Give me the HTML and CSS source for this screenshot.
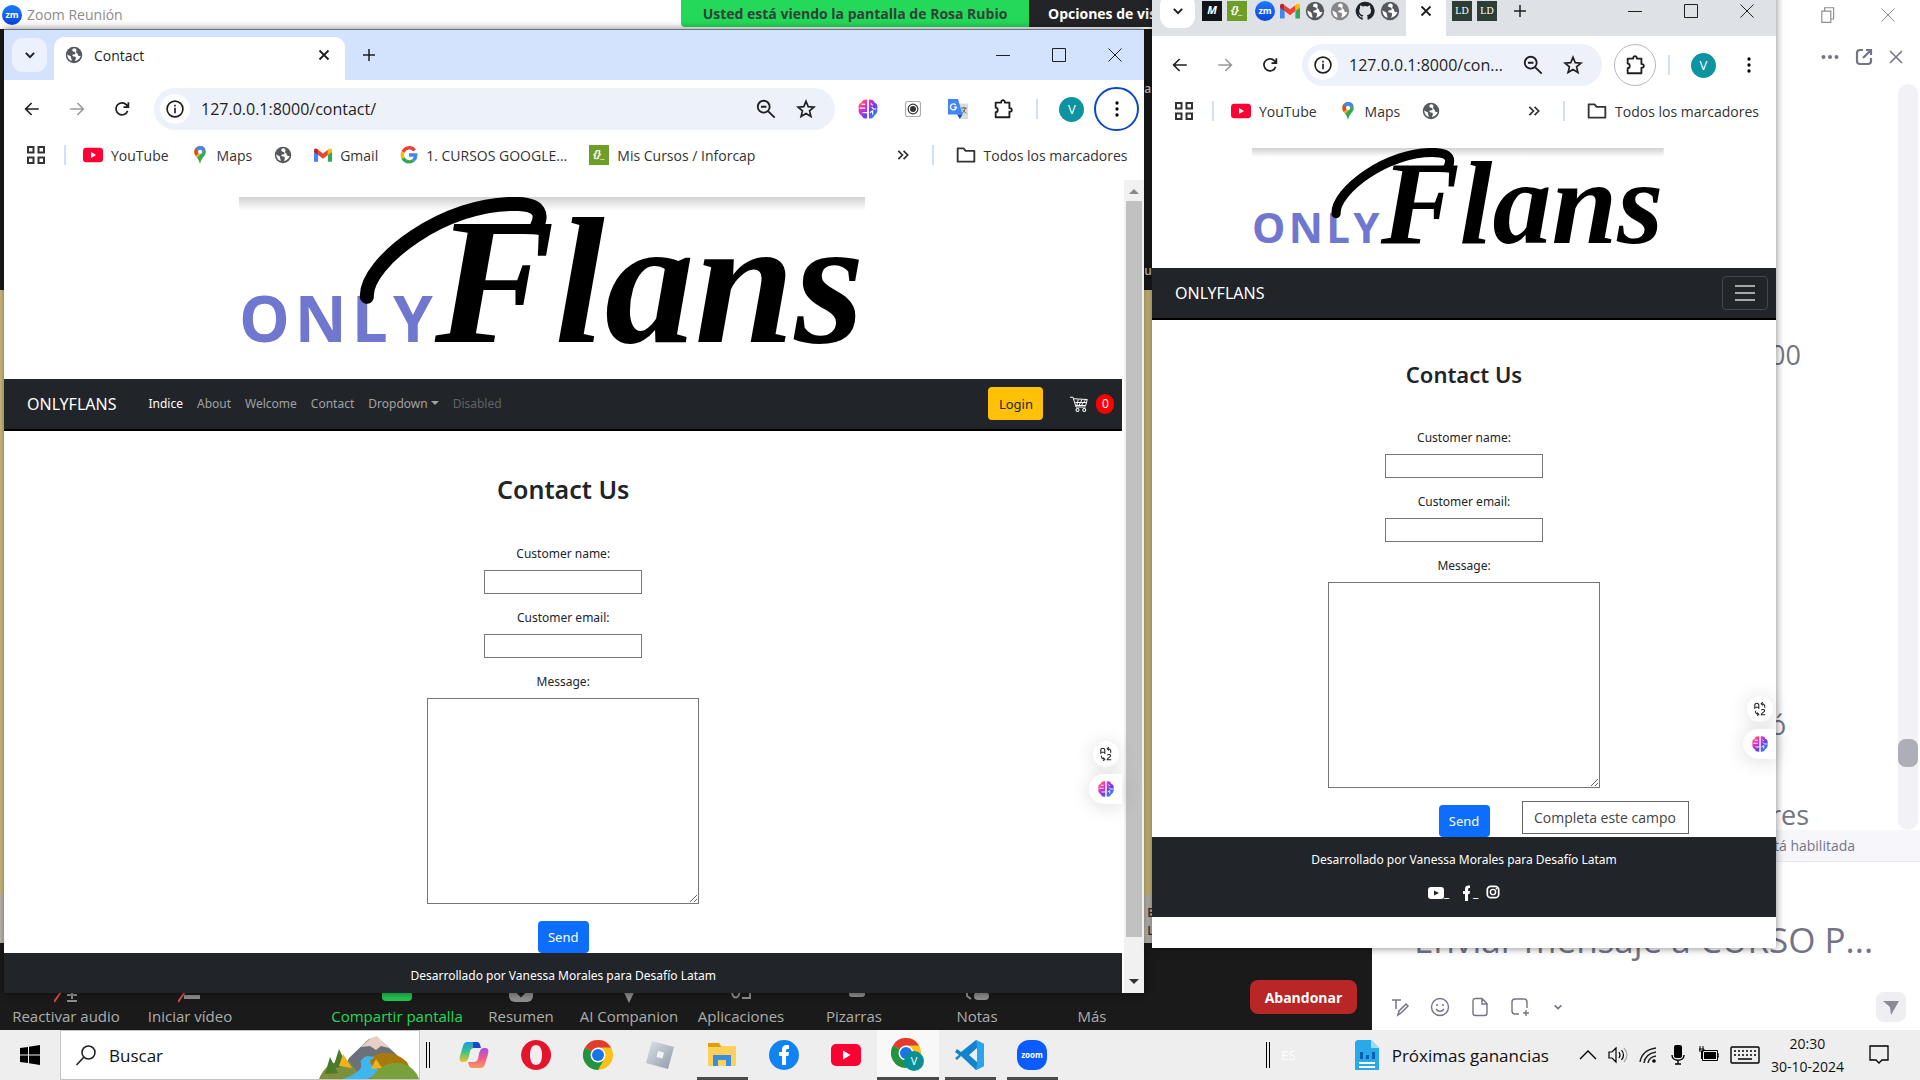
FILE: index.html
```html
<!DOCTYPE html>
<html lang="es">
<head>
<meta charset="utf-8">
<title>Zoom Reunión</title>
<link rel="stylesheet" href="styles.css">
</head>
<body>
<svg class="defs" width="0" height="0" aria-hidden="true">
  <defs>
    <linearGradient id="g-brain" x1="0" y1="0" x2="1" y2="1"><stop offset="0" stop-color="#ff8a00"/><stop offset=".3" stop-color="#f02fc2"/><stop offset=".6" stop-color="#6a3df5"/><stop offset="1" stop-color="#16a8ff"/></linearGradient>
    <linearGradient id="g-shade" x1="0" y1="0" x2="0" y2="1"><stop offset="0" stop-color="#d2d2d2"/><stop offset="1" stop-color="#fff"/></linearGradient>
    <linearGradient id="g-zm" x1="0" y1="0" x2="0" y2="1"><stop offset="0" stop-color="#1f7bff"/><stop offset="1" stop-color="#0846d6"/></linearGradient>
    <linearGradient id="g-cop1" x1="0" y1="0" x2="0" y2="1"><stop offset="0" stop-color="#1a9be8"/><stop offset=".5" stop-color="#3cc383"/><stop offset="1" stop-color="#f2c230"/></linearGradient>
    <linearGradient id="g-cop2" x1="0" y1="0" x2="0" y2="1"><stop offset="0" stop-color="#a54fe0"/><stop offset=".5" stop-color="#ee5a8c"/><stop offset="1" stop-color="#fb9a5a"/></linearGradient>
    <linearGradient id="g-rob" x1="0" y1="0" x2="1" y2="1"><stop offset="0" stop-color="#dde3ea"/><stop offset="1" stop-color="#8d99a8"/></linearGradient>
  </defs>
  <symbol id="chev" viewBox="0 0 24 24"><path d="M7 9.500l5 5 5-5" fill="none" stroke="currentColor" stroke-width="2.400"/></symbol>
  <symbol id="x" viewBox="0 0 24 24"><path d="M6 6l12 12M18 6L6 18" fill="none" stroke="currentColor" stroke-width="2.400"/></symbol>
  <symbol id="plus" viewBox="0 0 24 24"><path d="M12 4v16M4 12h16" fill="none" stroke="currentColor" stroke-width="2"/></symbol>
  <symbol id="w-min" viewBox="0 0 16 16"><path d="M1 8.500h14" stroke="currentColor" fill="none"/></symbol>
  <symbol id="w-max" viewBox="0 0 16 16"><path d="M1.500 1.500h13v13h-13z" stroke="currentColor" fill="none"/></symbol>
  <symbol id="w-close" viewBox="0 0 16 16"><path d="M1.500 1.500l13 13M14.500 1.500l-13 13" stroke="currentColor" fill="none"/></symbol>
  <symbol id="w-restore" viewBox="0 0 16 16"><path d="M2.500 4.500h8v10h-8zM5 4.500v-3h8v10h-2.500" stroke="currentColor" fill="none"/></symbol>
  <symbol id="globe" viewBox="0 0 24 24"><circle cx="12" cy="12" r="11" fill="currentColor"/><path d="M13 3c-3 0-4 2-3 3.500s4 .5 4 3-3 1-4 2.500 1 2 3 2 2 3 0 6c4-.5 7-3 8-7-2 1-4 0-4-2s-3-1-2-4c.500-1.500 1-2.500-2-4zM3 11c2 2 5 2 5 4s1 2 1 5c-4-1-6-5-6-9z" fill="#fff"/></symbol>
  <symbol id="back" viewBox="0 0 24 24"><path d="M21 12H4M11.500 4L3.500 12l8 8" fill="none" stroke="currentColor" stroke-width="2.200"/></symbol>
  <symbol id="fwd" viewBox="0 0 24 24"><path d="M3 12h17M12.500 4l8 8-8 8" fill="none" stroke="currentColor" stroke-width="2.200"/></symbol>
  <symbol id="reload" viewBox="0 0 24 24"><path d="M19.500 14.500A8 8 0 1 1 18 6.500l2 2.500M20.500 3v6.500H14" fill="none" stroke="currentColor" stroke-width="2.300"/></symbol>
  <symbol id="info" viewBox="0 0 24 24"><circle cx="12" cy="12" r="9.500" fill="none" stroke="currentColor" stroke-width="2"/><path d="M12 10.500V17M12 7v2" stroke="currentColor" stroke-width="2"/></symbol>
  <symbol id="zoomout" viewBox="0 0 24 24"><circle cx="9.500" cy="9.500" r="6.500" fill="none" stroke="currentColor" stroke-width="2"/><path d="M14.500 14.500l7 7M6.500 9.500h6" stroke="currentColor" stroke-width="2"/></symbol>
  <symbol id="star" viewBox="0 0 24 24"><path d="M12 3.500l2.400 5.900 6.300.5-4.800 4.100 1.500 6.200L12 16.900l-5.400 3.300 1.500-6.200-4.800-4.100 6.300-.5z" fill="none" stroke="currentColor" stroke-width="1.800"/></symbol>
  <symbol id="brain" viewBox="0 0 24 24"><path d="M11 2C8 1 5 3 5 5 2 6 1 9 2 12c-1 3 1 6 3 7 1 3 4 4 6 3zM13 2c3-1 6 1 6 3 3 1 4 4 3 7 1 3-1 6-3 7-1 3-4 4-6 3z" fill="url(#g-brain)"/><path d="M3 11h6M5 7h4M6 16h5M21 12h-3l-2-2M15 6l2 2M14 16l3-2v4" stroke="#fff" stroke-width="1.300" fill="none"/></symbol>
  <symbol id="rec" viewBox="0 0 24 24"><rect x="2" y="2" width="20" height="20" rx="3" fill="#fff" stroke="#aaa" stroke-width="1.500"/><circle cx="12" cy="12" r="6.500" fill="none" stroke="#333" stroke-width="1.600"/><circle cx="12" cy="12" r="4" fill="#333"/></symbol>
  <symbol id="translate" viewBox="0 0 24 24"><path d="M10 6h13v17H14z" fill="#dadce0"/><path d="M1 1h11l5 17H1z" fill="#4285f4"/><path d="M11 18h6l-3 5z" fill="#1a4fb5"/><path d="M9.500 7.500a3.300 3.300 0 1 0 .8 2.500H7.500" stroke="#fff" stroke-width="1.500" fill="none"/><path d="M15.500 11h6M18.500 9.500V11M20 11c-1 3-2 5-4 6M17 13l4 4" stroke="#555" fill="none"/></symbol>
  <symbol id="puzzle" viewBox="0 0 24 24"><path d="M4 5h6c-.5-3.500 4.500-3.500 4 0h5v6c3.500-.5 3.500 4.500 0 4v6H4v-5.500c3 0 3-5 0-5z" fill="none" stroke="currentColor" stroke-width="2" stroke-linejoin="round"/></symbol>
  <symbol id="kebab" viewBox="0 0 24 24"><circle cx="12" cy="4" r="2.200"/><circle cx="12" cy="12" r="2.200"/><circle cx="12" cy="20" r="2.200"/></symbol>
  <symbol id="apps" viewBox="0 0 18 18"><path d="M1 1h5.500v5.500H1zM11.500 1H17v5.500h-5.500zM1 11.500h5.500V17H1zM11.500 11.500H17V17h-5.500z" fill="none" stroke="currentColor" stroke-width="2"/></symbol>
  <symbol id="yt" viewBox="0 0 30 22"><rect width="30" height="22" rx="5" fill="#f03"/><path d="M12 6.500l7.500 4.500-7.500 4.500z" fill="#fff"/></symbol>
  <symbol id="pin" viewBox="0 0 16 22"><path d="M8 0a7 7 0 0 1 7 7.500C15 12 9.500 14 8 22 6.500 14 1 12 1 7.500A7 7 0 0 1 8 0z" fill="#34a853"/><path d="M8 0a7 7 0 0 1 6.500 4L5 14C3 12 1 10.500 1 7.500A7 7 0 0 1 8 0z" fill="#fbbc04"/><path d="M8 0a7 7 0 0 1 6.500 4L8 10 2 4a7 7 0 0 1 6-4z" fill="#4285f4"/><path d="M2.500 3L8 8l-5 4C1 9.500.5 6 2.500 3z" fill="#ea4335"/><circle cx="8" cy="7.200" r="2.600" fill="#fff"/></symbol>
  <symbol id="gmail" viewBox="0 0 24 18"><path d="M0 3v15h5.500V7z" fill="#4285f4"/><path d="M24 3v15h-5.500V7z" fill="#34a853"/><path d="M5.500 2L12 7l6.500-5v7L12 14 5.500 9z" fill="#ea4335"/><path d="M0 3C0 0 3-.5 5.500 2v7L0 5z" fill="#c5221f"/><path d="M24 3c0-3-3-3.500-5.500-1v7L24 5z" fill="#fbbc04"/></symbol>
  <symbol id="google" viewBox="0 0 24 24"><g fill="none" stroke-width="4.500"><path d="M19.500 6A9 9 0 0 0 4 8" stroke="#ea4335"/><path d="M4 8a9 9 0 0 0 0 8" stroke="#fbbc04"/><path d="M4 16a9 9 0 0 0 14 3" stroke="#34a853"/><path d="M18 19a9 9 0 0 0 3-7h-9" stroke="#4285f4"/></g></symbol>
  <symbol id="folder" viewBox="0 0 24 20"><path d="M2 2h7l2.500 3H22v13H2z" fill="none" stroke="currentColor" stroke-width="2.200" stroke-linejoin="round"/></symbol>
  <symbol id="more" viewBox="0 0 24 24"><path d="M4 5l7 7-7 7M13 5l7 7-7 7" fill="none" stroke="currentColor" stroke-width="3"/></symbol>
  <symbol id="github" viewBox="0 0 24 24"><path d="M12 1a11 11 0 0 0-3.500 21.500c.6.100.8-.3.800-.6v-2.200c-3 .7-3.700-1.300-3.700-1.300-.5-1.200-1.200-1.600-1.200-1.600-1-.7.100-.7.100-.7 1.100.1 1.700 1.200 1.700 1.200 1 1.700 2.600 1.200 3.200.9.100-.7.400-1.200.7-1.500-2.500-.3-5-1.200-5-5.400 0-1.200.4-2.200 1.100-3-.1-.3-.5-1.400.1-2.900 0 0 1-.3 3.100 1.100a10 10 0 0 1 5.600 0c2-1.400 3-1.100 3-1.100.6 1.500.2 2.600.1 2.900.7.800 1.100 1.800 1.100 3 0 4.200-2.500 5.100-5 5.400.4.300.8 1 .8 2v3.200c0 .3.200.7.800.6A11 11 0 0 0 12 1z" fill="#1f2328"/></symbol>
  <symbol id="swap" viewBox="0 0 24 24"><path d="M3 12V6a3.500 4 0 0 1 7 0v6M3 9h7M20 10c1-4-1-7-5-7M17 0l-3 3 3 3M4 15c0 4 2 6 6 6M7 18l3 3-3 3M14 14c3-2 6-1 6 1s-6 4-6 7h7" fill="none" stroke="currentColor" stroke-width="1.800"/></symbol>
  <symbol id="cart" viewBox="0 0 24 24"><path d="M0 3h4l4 13h13M5 5l18 1-2 8H8M11 6l-2 8M16 6l-4 8M21 6l-6 8M7 10h15" fill="none" stroke="currentColor" stroke-width="1.300"/><circle cx="10" cy="20" r="2" fill="none" stroke="currentColor" stroke-width="1.400"/><circle cx="19" cy="20" r="2" fill="none" stroke="currentColor" stroke-width="1.400"/></symbol>
  <symbol id="logo" viewBox="0 0 627 182">
    <rect width="627" height="14" fill="url(#g-shade)"/>
    <text x="0" y="145" class="logo-only">ONLY</text>
    <path d="M128 100C126 66 206 4 280 7C302 8 304 18 298 30" fill="none" stroke="#000" stroke-width="14" stroke-linecap="round"/>
    <text x="196" y="145" class="logo-flans">Flans</text>
  </symbol>
</svg>

<main class="meeting">
  <header class="meeting-bar">
    <svg class="i20"><circle cx="10" cy="10" r="10" fill="url(#g-zm)"/><text x="10" y="13" class="zm-text">zm</text></svg>
    <span class="meeting-title">Zoom Reunión</span>
    <span class="share-note">Usted está viendo la pantalla de Rosa Rubio</span>
    <button class="share-options">Opciones de visualización</button>
    <span class="meeting-controls">
      <button class="plain" aria-label="Restaurar"><svg class="i18"><use href="#w-restore"/></svg></button>
      <button class="plain" aria-label="Cerrar"><svg class="i16"><use href="#w-close"/></svg></button>
    </span>
  </header>

  <section class="stage">
    <div class="stage-dark"></div>
    <div class="stage-tan"></div>
    <div class="stage-grey"></div>
    <nav class="meeting-tools">
      <button class="tool"><svg class="i24"><path d="M12 2v17M7 15h10M7 21h10" stroke="#8e8e8e" stroke-width="2" transform="translate(6)"/><path d="M0 22L14 2" stroke="#e0484d" stroke-width="2"/></svg>Reactivar audio</button>
      <button class="tool"><svg class="i24"><path d="M6 17h16" stroke="#8e8e8e" stroke-width="4"/><path d="M0 22L14 2" stroke="#e0484d" stroke-width="2"/></svg>Iniciar vídeo</button>
      <span></span>
      <button class="tool tool-share"><svg class="i30"><rect width="30" height="26" y="1" rx="4" fill="#23c552"/></svg>Compartir pantalla</button>
      <button class="tool"><svg class="i24"><rect y="2" width="24" height="20" rx="6" fill="#8e8e8e"/><path d="M8 12l4 4 4-4" stroke="#222" stroke-width="2"/></svg>Resumen</button>
      <button class="tool"><svg class="i24"><path d="M2 2h20L12 23z" fill="#8e8e8e"/></svg>AI Companion</button>
      <button class="tool"><svg class="i24"><path d="M3 10c0 10 7 10 8 0M13 18h8V8" fill="none" stroke="#8e8e8e" stroke-width="2"/></svg>Aplicaciones</button>
      <button class="tool"><svg class="i24"><rect x="7" y="8" width="16" height="9" rx="3" fill="#8e8e8e"/></svg>Pizarras</button>
      <button class="tool"><svg class="i24"><path d="M2 4v12l4 3" fill="none" stroke="#8e8e8e" stroke-width="2"/><rect x="9" y="12" width="15" height="8" rx="4" fill="#8e8e8e"/></svg>Notas</button>
      <button class="tool"><svg class="i24"></svg>Más</button>
      <button class="leave">Abandonar</button>
    </nav>
  </section>

  <aside class="chat">
    <div class="chat-head">
      <button class="plain" aria-label="Más opciones"><svg class="i18" viewBox="0 0 18 18"><circle cx="2.500" cy="9" r="2"/><circle cx="9" cy="9" r="2"/><circle cx="15.500" cy="9" r="2"/></svg></button>
      <button class="plain" aria-label="Separar"><svg class="i18" viewBox="0 0 18 18"><path d="M8 2H5a3 3 0 0 0-3 3v8a3 3 0 0 0 3 3h8a3 3 0 0 0 3-3v-3M11 2h5v5M16 2L8 10" fill="none" stroke="currentColor" stroke-width="2.200"/></svg></button>
      <button class="plain" aria-label="Cerrar chat"><svg class="i14" viewBox="0 0 14 14"><path d="M1 1l12 12M13 1L1 13" fill="none" stroke="currentColor" stroke-width="1.600"/></svg></button>
    </div>
    <div class="chat-log">
      <div class="chat-lines"><p class="line-first">00</p><p class="line-mid">ó</p><p>res</p></div>
      <div class="chat-track"><div class="chat-thumb"></div></div>
    </div>
    <p class="chat-note">tá habilitada</p>
    <div class="composer">
      <p class="composer-text">Enviar mensaje a CURSO P...</p>
      <div class="composer-tools">
        <button class="plain" aria-label="Formato"><svg class="i20" viewBox="0 0 20 20"><path d="M2 3h9M6 3v9M8 18l1-4 7-7 2 2-7 7z" fill="none" stroke="currentColor" stroke-width="1.500"/></svg></button>
        <button class="plain" aria-label="Emoji"><svg class="i20" viewBox="0 0 20 20"><circle cx="10" cy="10" r="8.500" fill="none" stroke="currentColor" stroke-width="1.400"/><path d="M6 12c2 3 6 3 8 0M7 7v2M13 7v2" fill="none" stroke="currentColor" stroke-width="1.500"/></svg></button>
        <button class="plain" aria-label="Archivo"><svg class="i20" viewBox="0 0 20 20"><path d="M5 1.500h7l5 5V16a2.500 2.500 0 0 1-2.500 2.500h-9A2.500 2.500 0 0 1 3 16V4a2.500 2.500 0 0 1 2-2.500zM12 2v5h5" fill="none" stroke="currentColor" stroke-width="1.400"/></svg></button>
        <button class="plain" aria-label="Captura"><svg class="i20" viewBox="0 0 20 20"><path d="M9 17H5a3 3 0 0 1-3-3V5a3 3 0 0 1 3-3h9a3 3 0 0 1 3 3v6M16 13v6M13 16h6" fill="none" stroke="currentColor" stroke-width="1.400"/></svg></button>
        <button class="plain" aria-label="Más"><svg class="i16"><use href="#chev"/></svg></button>
        <button class="chat-send" aria-label="Enviar"><svg class="i18" viewBox="0 0 18 18"><path d="M1 3h16L9 17 8 9z" fill="#8a8a98"/></svg></button>
      </div>
    </div>
  </aside>

  <div class="shared-edge"><span>a</span><span class="edge-mid">un</span><span class="edge-low">E<br>L</span></div>

  <article class="window window-front">
    <header class="titlebar">
      <button class="tab-search" aria-label="Buscar pestañas"><svg class="i20"><use href="#chev"/></svg></button>
      <div class="tab tab-wide">
        <svg class="i18 grey"><use href="#globe"/></svg><span class="tab-title">Contact</span>
        <button class="plain" aria-label="Cerrar pestaña"><svg class="i18"><use href="#x"/></svg></button>
      </div>
      <button class="new-tab" aria-label="Nueva pestaña"><svg class="i18"><use href="#plus"/></svg></button>
      <span class="win-controls">
        <button class="plain" aria-label="Minimizar"><svg class="i16"><use href="#w-min"/></svg></button>
        <button class="plain" aria-label="Maximizar"><svg class="i16"><use href="#w-max"/></svg></button>
        <button class="plain" aria-label="Cerrar"><svg class="i16"><use href="#w-close"/></svg></button>
      </span>
    </header>
    <div class="toolbar">
      <button class="tb" aria-label="Atrás"><svg class="i18"><use href="#back"/></svg></button>
      <button class="tb faded" aria-label="Adelante"><svg class="i18"><use href="#fwd"/></svg></button>
      <button class="tb" aria-label="Recargar"><svg class="i18"><use href="#reload"/></svg></button>
      <div class="address"><span class="site-info"><svg class="i20"><use href="#info"/></svg></span>
        <input class="url" aria-label="Dirección" value="127.0.0.1:8000/contact/">
        <svg class="i22"><use href="#zoomout"/></svg><svg class="i22"><use href="#star"/></svg></div>
      <button class="tb" aria-label="Asistente"><svg class="i22"><use href="#brain"/></svg></button>
      <button class="tb" aria-label="Grabar"><svg class="i18"><use href="#rec"/></svg></button>
      <button class="tb" aria-label="Traductor"><svg class="i22"><use href="#translate"/></svg></button>
      <button class="tb" aria-label="Extensiones"><svg class="i22"><use href="#puzzle"/></svg></button>
      <i class="sep sep-tb"></i>
      <button class="tb"><span class="avatar">V</span></button>
      <button class="tb ring-blue" aria-label="Menú"><svg class="i18"><use href="#kebab"/></svg></button>
    </div>
    <nav class="bookmarks">
      <svg class="i18"><use href="#apps"/></svg><i class="sep sep-first"></i>
      <a href="#"><svg class="i20"><use href="#yt"/></svg>YouTube</a>
      <a href="#"><svg class="i18"><use href="#pin"/></svg>Maps</a>
      <a href="#" aria-label="Sitio"><svg class="i18 grey"><use href="#globe"/></svg></a>
      <a href="#"><svg class="i18"><use href="#gmail"/></svg>Gmail</a>
      <a href="#"><svg class="i18"><use href="#google"/></svg>1. CURSOS GOOGLE...</a>
      <a href="#"><span class="fav fav-green">{}_</span>Mis Cursos / Inforcap</a>
      <svg class="i14 push"><use href="#more"/></svg><i class="sep"></i>
      <a href="#"><svg class="i20"><use href="#folder"/></svg>Todos los marcadores</a>
    </nav>
    <div class="viewport">
      <div class="page page-wide">
        <svg class="logo" viewBox="0 0 627 182" role="img" aria-label="OnlyFlans"><use href="#logo"/></svg>
        <nav class="site-nav">
          <a class="brand" href="#">ONLYFLANS</a>
          <a class="current" href="#">Indice</a><a href="#">About</a><a href="#">Welcome</a><a href="#">Contact</a><a class="drop" href="#">Dropdown</a><a class="disabled" href="#">Disabled</a>
          <button class="login">Login</button>
          <a class="cart" href="#" aria-label="Carrito"><svg class="i18"><use href="#cart"/></svg><span class="count">0</span></a>
        </nav>
        <form class="contact">
          <h1>Contact Us</h1>
          <label for="name1">Customer name:</label><input id="name1" type="text">
          <label for="mail1">Customer email:</label><input id="mail1" type="email">
          <label for="msg1">Message:</label><textarea id="msg1"></textarea>
          <button class="send" type="button">Send</button>
        </form>
        <footer class="site-foot"><p>Desarrollado por Vanessa Morales para Desafío Latam</p></footer>
      </div>
      <div class="scrollbar">
        <svg class="i10" viewBox="0 0 10 10"><path d="M0 8l5-5 5 5z" fill="#8a8a8a"/></svg>
        <div class="thumb"></div>
        <svg class="i10" viewBox="0 0 10 10"><path d="M0 2l5 5 5-5z" fill="#333"/></svg>
      </div>
    </div>
    <div class="helper helper-front">
      <button class="helper-small" aria-label="Traducir"><svg class="i14"><use href="#swap"/></svg></button>
      <button class="helper-big" aria-label="Asistente"><svg class="i18"><use href="#brain"/></svg></button>
    </div>
  </article>

  <article class="window window-side">
    <header class="titlebar titlebar-grey">
      <button class="tab-search" aria-label="Buscar pestañas"><svg class="i20"><use href="#chev"/></svg></button>
      <div class="pinned">
        <span class="fav fav-black">M</span><span class="fav fav-green">{}_</span>
        <svg class="i20"><circle cx="10" cy="10" r="10" fill="url(#g-zm)"/><text x="10" y="13" class="zm-text">zm</text></svg>
        <svg class="i20"><use href="#gmail"/></svg><svg class="i20 grey"><use href="#globe"/></svg><svg class="i20 pale"><use href="#globe"/></svg><svg class="i20"><use href="#github"/></svg><svg class="i20 grey"><use href="#globe"/></svg>
      </div>
      <div class="tab tab-small"><button class="plain" aria-label="Cerrar pestaña"><svg class="i18"><use href="#x"/></svg></button></div>
      <div class="pinned pinned-end"><span class="fav fav-ld">LD</span><span class="fav fav-ld">LD</span></div>
      <button class="new-tab" aria-label="Nueva pestaña"><svg class="i18"><use href="#plus"/></svg></button>
      <span class="win-controls">
        <button class="plain" aria-label="Minimizar"><svg class="i16"><use href="#w-min"/></svg></button>
        <button class="plain" aria-label="Maximizar"><svg class="i16"><use href="#w-max"/></svg></button>
        <button class="plain" aria-label="Cerrar"><svg class="i16"><use href="#w-close"/></svg></button>
      </span>
    </header>
    <div class="toolbar">
      <button class="tb" aria-label="Atrás"><svg class="i18"><use href="#back"/></svg></button>
      <button class="tb faded" aria-label="Adelante"><svg class="i18"><use href="#fwd"/></svg></button>
      <button class="tb" aria-label="Recargar"><svg class="i18"><use href="#reload"/></svg></button>
      <div class="address"><span class="site-info"><svg class="i20"><use href="#info"/></svg></span>
        <input class="url" aria-label="Dirección" value="127.0.0.1:8000/con...">
        <svg class="i22"><use href="#zoomout"/></svg><svg class="i22"><use href="#star"/></svg></div>
      <button class="tb ring-grey" aria-label="Extensiones"><svg class="i22"><use href="#puzzle"/></svg></button>
      <i class="sep sep-tb"></i>
      <button class="tb"><span class="avatar">V</span></button>
      <button class="tb" aria-label="Menú"><svg class="i18"><use href="#kebab"/></svg></button>
    </div>
    <nav class="bookmarks">
      <svg class="i18"><use href="#apps"/></svg><i class="sep sep-first"></i>
      <a href="#"><svg class="i20"><use href="#yt"/></svg>YouTube</a>
      <a href="#"><svg class="i18"><use href="#pin"/></svg>Maps</a>
      <a href="#" aria-label="Sitio"><svg class="i18 grey"><use href="#globe"/></svg></a>
      <svg class="i14 push"><use href="#more"/></svg><i class="sep"></i>
      <a href="#"><svg class="i20"><use href="#folder"/></svg>Todos los marcadores</a>
    </nav>
    <div class="viewport">
      <div class="page page-narrow">
        <svg class="logo" viewBox="0 0 627 182" role="img" aria-label="OnlyFlans"><use href="#logo"/></svg>
        <nav class="site-nav">
          <a class="brand" href="#">ONLYFLANS</a>
          <button class="burger" aria-label="Menú"><svg class="i22" viewBox="0 0 22 22"><path d="M1 4h20M1 11h20M1 18h20" stroke="#a6a8aa" stroke-width="2"/></svg></button>
        </nav>
        <form class="contact">
          <h1>Contact Us</h1>
          <label for="name2">Customer name:</label><input id="name2" type="text">
          <label for="mail2">Customer email:</label><input id="mail2" type="email">
          <label for="msg2">Message:</label><textarea id="msg2"></textarea>
          <div class="send-wrap"><button class="send" type="button">Send</button><span class="tip">Completa este campo</span></div>
        </form>
        <footer class="site-foot"><p>Desarrollado por Vanessa Morales para Desafío Latam</p>
          <div class="social">
            <a href="#" aria-label="YouTube"><svg class="i16" viewBox="0 0 16 16"><rect y="2" width="16" height="12" rx="3" fill="#fff"/><path d="M6 5.500l5 2.500-5 2.500z" fill="#212529"/></svg>_</a>
            <a href="#" aria-label="Facebook"><svg class="i16" viewBox="0 0 16 16"><path d="M8 16V9H6V6h2V4c0-3 2-4 5-3.500V3c-2 0-2 .5-2 3h2l-.5 3H11v7z" fill="#fff"/></svg>_</a>
            <a href="#" aria-label="Instagram"><svg class="i14" viewBox="0 0 16 16"><rect x="1.500" y="1.500" width="13" height="13" rx="4" fill="none" stroke="#fff" stroke-width="2"/><circle cx="8" cy="8" r="3" fill="none" stroke="#fff" stroke-width="1.700"/><circle cx="12" cy="4" r="1" fill="#fff"/></svg></a>
          </div>
        </footer>
      </div>
    </div>
    <div class="helper helper-side">
      <button class="helper-small" aria-label="Traducir"><svg class="i14"><use href="#swap"/></svg></button>
      <button class="helper-big" aria-label="Asistente"><svg class="i18"><use href="#brain"/></svg></button>
    </div>
  </article>
</main>

<footer class="taskbar">
  <button class="start" aria-label="Inicio"><svg class="i20" viewBox="0 0 20 20"><path d="M0 3l8-1v7.500H0zM9 1.800L20 0v9.500H9zM0 10.500h8V18l-8-1zM9 10.500h11V20L9 18.200z"/></svg></button>
  <div class="search">
    <svg class="i22" viewBox="0 0 22 22"><circle cx="13.500" cy="8.500" r="6.500" fill="none" stroke="#222" stroke-width="1.600"/><path d="M9 13l-7.500 8" stroke="#222" stroke-width="1.600"/></svg>
    <input aria-label="Buscar" value="Buscar">
    <svg class="scene" viewBox="0 0 100 43"><path d="M30 22L50 3l8-2 20 18 8 24H20z" fill="#6c7078"/><path d="M42 11L52 2l6-2 12 12-8-2-5 4-6-4z" fill="#e6cfc4"/><path d="M50 22q20-12 38 4l8 17H40z" fill="#a8790f"/><path d="M0 43q8-20 30-18l14 18z" fill="#7d8f3a"/><path d="M24 43q20-8 18-14t6-9l8 1q-10 5 0 10t-8 12z" fill="#3fb6ee"/><path d="M52 43q10-18 30-16 14 4 18 16z" fill="#79a03a"/><path d="M14 32l6-19 8 17zM6 38l5-17 8 16z" fill="#4b7a2b"/><path d="M20 30l4-12 9 14zM52 33l5-10 6 9z" fill="#f2b21d"/></svg>
  </div>
  <i class="grip grip-left"></i>
  <div class="apps">
    <button class="app" aria-label="Copilot"><svg class="i30" viewBox="0 0 30 30"><path d="M8 2h9c3 0 3 3 4 6h-6c-4 0-4 4-5 8s-2 6-6 6c-3 0-4-2-3-6l3-10c1-3 2-4 4-4z" fill="url(#g-cop1)"/><path d="M14 2h4c3 0 3 3 4 6h-8z" fill="#1b49c4"/><path d="M22 28h-9c-3 0-3-3-4-6h6c4 0 4-4 5-8s2-6 6-6c3 0 4 2 3 6l-3 10c-1 3-2 4-4 4z" fill="url(#g-cop2)"/></svg></button>
    <button class="app" aria-label="Opera"><svg class="i30" viewBox="0 0 30 30"><path fill-rule="evenodd" d="M15 0a15 15 0 1 0 .1 0zM15 5c4 0 6 4 6 10s-2 10-6 10-6-4-6-10 2-10 6-10z" fill="#e3142c"/></svg></button>
    <button class="app" aria-label="Chrome"><svg class="i30" viewBox="0 0 30 30"><circle cx="15" cy="15" r="15" fill="#fbc116"/><path d="M15 15L2 7.500A15 15 0 0 1 28 7.500H15z" fill="#e33b2e"/><path d="M15 15L2 7.500A15 15 0 0 0 15 30l6.500-11.500z" fill="#229342"/><circle cx="15" cy="15" r="7.500" fill="#fff"/><circle cx="15" cy="15" r="6" fill="#1a73e8"/></svg></button>
    <button class="app" aria-label="Roblox"><svg class="i30" viewBox="0 0 30 30"><path d="M7 1l22 6-6 22-22-6z" fill="url(#g-rob)"/><path d="M13 11l6 1.500-1.500 6-6-1.500z" fill="#f2f4f6"/></svg></button>
    <button class="app open" aria-label="Explorador"><svg class="i30" viewBox="0 0 30 30"><path d="M1 3h11l3 3h14v20H1z" fill="#ffd15c"/><path d="M1 3h11l2 4H1z" fill="#e0a100"/><path d="M6 26V15h18v11h-5v-6h-8v6z" fill="#3a8edb"/></svg></button>
    <button class="app" aria-label="Facebook"><svg class="i30" viewBox="0 0 30 30"><circle cx="15" cy="15" r="15" fill="#1083f2"/><path d="M13 25v-9h-3v-4h3v-2c0-4 2-5.500 7-5v4c-3 0-3 .5-3 3h3l-.6 4H17v9z" fill="#fff"/></svg></button>
    <button class="app" aria-label="YouTube"><svg class="i30"><use href="#yt"/></svg></button>
    <button class="app open active" aria-label="Chrome, V"><svg class="i34" viewBox="0 0 34 34"><circle cx="15" cy="15" r="15" fill="#fbc116"/><path d="M15 15L2 7.500A15 15 0 0 1 28 7.500H15z" fill="#e33b2e"/><path d="M15 15L2 7.500A15 15 0 0 0 15 30l6.500-11.500z" fill="#229342"/><circle cx="15" cy="15" r="7.500" fill="#fff"/><circle cx="15" cy="15" r="6" fill="#1a73e8"/><circle cx="23" cy="23" r="10" fill="#0a8f97"/><text x="23" y="27" class="badge-v">V</text></svg></button>
    <button class="app open" aria-label="VS Code"><svg class="i30" viewBox="0 0 30 30"><path d="M21 0l8 4v22l-8 4L6 16l-4 4-2-2 4-3-4-3 2-3 4 3zM22 8l-8 7 8 7z" fill="#1283cc" fill-rule="evenodd"/><path d="M21 0l8 4v22l-8 4 1-6V6z" fill="#2aa4ee"/></svg></button>
    <button class="app open" aria-label="Zoom"><svg class="i30" viewBox="0 0 30 30"><rect width="30" height="30" rx="12" fill="#0b5cff"/><text x="15" y="18" class="zoom-text">zoom</text></svg></button>
  </div>
  <div class="tray">
    <i class="grip"></i><span class="lang">ES</span>
    <button class="news"><svg class="news-icon" viewBox="0 0 24 30"><path d="M2 0h14l8 8v22H0V2z" fill="#29a9ea"/><path d="M16 0l8 8h-8z" fill="#9fdcf8"/><path d="M5 12h3v7H5zM11 15h3v4h-3zM17 12h3v7h-3z" fill="#0a5fb0"/><path d="M4 23h16M4 27h16" stroke="#fff" stroke-width="2"/></svg>Próximas ganancias</button>
    <svg class="i18" viewBox="0 0 18 18"><path d="M1 13l8-8 8 8" fill="none" stroke="#000" stroke-width="1.400"/></svg>
    <svg class="i20" viewBox="0 0 20 20"><path d="M1 7h3l4-4v14l-4-4H1zM11 7q2 3 0 6M13.500 5q4 5 0 10" fill="none" stroke="#000" stroke-width="1.200"/><path d="M16 3q6 7 0 14" fill="none" stroke="#aaa" stroke-width="1.200"/></svg>
    <svg class="i18" viewBox="0 0 18 18"><path d="M1 16Q3 4 17 2M5 17Q6 8 17 6M9 17q1-6 8-7" fill="none" stroke="#222" stroke-width="1.400"/><circle cx="15" cy="15" r="1.800"/></svg>
    <svg class="i20" viewBox="0 0 20 20"><rect x="6" width="8" height="13" rx="2"/><path d="M4 10c0 7 12 7 12 0M10 15v4M7 19h6" fill="none" stroke="#000" stroke-width="1.400"/></svg>
    <svg class="i20" viewBox="0 0 20 20"><rect x="5" y="7" width="12" height="7"/><path d="M3.500 5.500h15v10h-15zM18 9h2v3h-2M1 1v4M4 1v4M0 4h5v2H0zM2.500 6v8" fill="none" stroke="#000"/></svg>
    <svg class="i30" viewBox="0 0 30 30"><rect x="1" y="7" width="28" height="16" rx="1" fill="none" stroke="#000" stroke-width="1.400"/><path d="M4 11h22M4 15h22" stroke="#000" stroke-width="1.500" stroke-dasharray="2 2"/><path d="M8 19h14" stroke="#000" stroke-width="1.500"/></svg>
    <time class="clock">20:30<br>30-10-2024</time>
    <svg class="i20 notify" viewBox="0 0 20 20"><path d="M1 1h18v14h-6l-3 3-3-3H1z" fill="none" stroke="#000" stroke-width="1.300"/></svg>
  </div>
</footer>
</body>
</html>
```
FILE: styles.css
```css
* { box-sizing: border-box; }
body {
  margin: 0;
  height: 100vh;
  display: flex;
  flex-direction: column;
  overflow: hidden;
  font-family: "Open Sans", "Noto Sans", sans-serif;
  font-size: 12px;
  color: #212529;
}
p, h1 { margin: 0; }
a { color: inherit; text-decoration: none; }
button, input, textarea { font: inherit; color: inherit; margin: 0; }
button { border: 0; background: none; padding: 0; white-space: nowrap; }
svg { display: block; flex: none; }
.defs { position: absolute; }

.i10 { width: 10px; height: 10px; }
.i14 { width: 14px; height: 14px; }
.i16 { width: 16px; height: 16px; }
.i18 { width: 18px; height: 18px; }
.i20 { width: 20px; height: 20px; }
.i22 { width: 22px; height: 22px; }
.i24 { width: 24px; height: 24px; }
.i30 { width: 30px; height: 30px; }
.i34 { width: 34px; height: 34px; }
.grey { color: #55585d; }
.pale { color: #85858a; }
.plain { display: grid; place-items: center; }
.zm-text { font-size: 9px; font-weight: 700; fill: #fff; text-anchor: middle; }

/* Meeting backdrop */
.meeting {
  flex: 1;
  min-height: 0;
  position: relative;
  display: grid;
  grid-template-columns: 1372fr 548fr;
  grid-template-rows: 29px 1fr;
}
.meeting-bar {
  grid-column: 1 / -1;
  display: flex;
  align-items: center;
  padding-left: 2px;
  gap: 5px;
  background: #fff;
}
.meeting-title { flex: 0 0 649px; font-size: 14px; color: #8c8c8c; }
.share-note {
  flex: 0 0 348px;
  height: 27px;
  line-height: 27px;
  align-self: flex-start;
  text-align: center;
  background: #24d959;
  color: #30423a;
  font-size: 14px;
  font-weight: 700;
  border-radius: 0 0 0 4px;
}
.share-options {
  align-self: flex-start;
  height: 27px;
  margin-left: -5px;
  padding: 0 19px;
  background: #232427;
  color: #fff;
  font-size: 14px;
  font-weight: 700;
}
.meeting-controls { margin-left: auto; display: flex; gap: 43px; padding-right: 24px; color: #8c8c8c; }
.stage { display: flex; flex-direction: column; background: #1a1a1a; min-height: 0; }
.stage-dark { flex: 261; }
.stage-tan { flex: 605; background: #d6c37f; }
.stage-grey { flex: 48; background: #c4c0b8; }
.meeting-tools {
  flex: 0 0 87px;
  display: grid;
  grid-template-columns: 132fr 116fr 72fr 154fr 94fr 122fr 102fr 124fr 122fr 108fr 226fr;
}
.tool {
  display: flex;
  flex-direction: column;
  align-items: center;
  justify-content: flex-end;
  gap: 2px;
  padding-bottom: 4px;
  font-size: 15px;
  line-height: 20px;
  color: #adadad;
}
.tool-share { color: #23d959; }
.leave {
  justify-self: end;
  align-self: center;
  margin: 21px 15px 0 0;
  width: 107px;
  height: 34px;
  border-radius: 8px;
  background: #b82626;
  color: #fff;
  font-size: 14px;
  font-weight: 700;
}

/* Sliver of the shared screen between the two windows */
.shared-edge {
  position: absolute;
  left: 59.6%;
  top: 80px;
  width: 12px;
  height: 860px;
  overflow: hidden;
  display: flex;
  flex-direction: column;
  font-size: 12px;
  line-height: 18px;
  font-weight: 600;
  color: #ccc;
}
.edge-mid { margin-top: 164px; }
.edge-low { margin-top: auto; padding-left: 3px; color: #333; }

/* Chat panel */
.chat { display: flex; flex-direction: column; min-height: 0; background: #fff; color: #747487; }
.chat-head {
  flex: 0 0 55px;
  display: flex;
  justify-content: flex-end;
  align-items: center;
  gap: 16px;
  padding-right: 17px;
  fill: currentColor;
}
.chat-log { flex: 1; min-height: 0; display: flex; }
.chat-lines {
  flex: 1;
  display: flex;
  flex-direction: column;
  justify-content: flex-end;
  padding-left: 398px;
  font-size: 27px;
  line-height: 30px;
}
.line-first { margin-bottom: 340px; }
.line-mid { margin-bottom: 60px; }
.chat-track { width: 20px; margin-right: 2px; border-radius: 10px; background: #f1f1f6; display: flex; flex-direction: column; justify-content: flex-end; padding-bottom: 63px; }
.chat-thumb { height: 28px; border-radius: 8px; background: #aeaeb8; }
.chat-note { background: #f7f6fb; border-bottom: 1px solid #e8e8f0; padding-left: 402px; font-size: 14px; line-height: 31px; }
.composer { flex: 0 0 168px; display: flex; flex-direction: column; justify-content: flex-end; }
.composer-text { padding-left: 42px; font-size: 35px; line-height: 50px; white-space: nowrap; }
.composer-tools { display: flex; align-items: center; gap: 20px; padding: 27px 14px 8px 18px; }
.chat-send { margin-left: auto; width: 30px; height: 30px; border-radius: 8px; background: #eeeef3; display: grid; place-items: center; }

/* Browser windows */
.window {
  position: absolute;
  display: flex;
  flex-direction: column;
  background: #fff;
  box-shadow: 0 0 8px rgba(0, 0, 0, .5);
}
.window-front { left: 4px; top: 29px; width: 59.4%; bottom: 37px; border-top: 1px solid #66757c; }
.window-side { left: 60%; top: -14px; right: 7.5%; bottom: 82px; }
.titlebar { flex: 0 0 50px; display: flex; align-items: flex-end; padding-left: 8px; background: #d3e3fd; color: #1f1f1f; }
.titlebar-grey { background: #dee1e6; }
.tab-search { width: 35px; height: 34px; margin: 0 7px 8px 0; border-radius: 11px; background: #ebf2fe; display: grid; place-items: center; }
.titlebar-grey .tab-search { background: #fff; }
.tab { height: 43px; display: flex; align-items: center; background: #fff; border-radius: 10px 10px 0 0; padding-bottom: 7px; }
.tab-wide { width: 291px; padding-left: 11px; padding-right: 12px; gap: 11px; }
.tab-small { width: 40px; justify-content: center; }
.tab-title { flex: 1; font-size: 14px; }
.new-tab { width: 48px; height: 50px; display: grid; place-items: center; }
.titlebar-grey .new-tab { width: 34px; }
.win-controls { margin-left: auto; height: 50px; display: flex; align-items: center; gap: 40px; padding-right: 21px; }
.pinned { display: flex; align-items: center; gap: 5px; height: 50px; padding-right: 6px; }
.pinned .fav-green { margin-right: 3px; }
.pinned-end { padding-left: 6px; }
.fav { width: 20px; height: 20px; line-height: 18px; text-align: center; font-size: 11px; font-weight: 700; font-style: italic; color: #fff; }
.fav-black { background: #111418; }
.fav-green { background: #6f9e27; }
.fav-ld { background: #2c3e36; font: 10px/20px "Liberation Serif", serif; }
.toolbar { flex: 0 0 58px; display: flex; align-items: center; padding: 0 5px; color: #1f1f1f; }
.tb { width: 45px; height: 44px; display: grid; place-items: center; border-radius: 22px; }
.faded { color: #9a9a9a; }
.ring-blue { border: 2px solid #0b48c9; }
.ring-grey { width: 42px; height: 42px; margin: 0 1px 0 2px; border: 1px solid #b9b9b9; }
.address { flex: 1; min-width: 0; height: 42px; margin: 0 10px; padding: 0 18px 0 6px; border-radius: 21px; background: #ecf1fa; display: flex; align-items: center; gap: 18px; }
.site-info { width: 30px; height: 30px; border-radius: 15px; background: #fff; display: grid; place-items: center; }
.url { flex: 1; min-width: 0; border: 0; padding: 0; margin-left: -7px; background: none; font-size: 16px; }
.sep { width: 2px; height: 20px; background: #cfdffc; }
.sep-first { margin: 0 -5px 0 -3px; }
.sep-tb { margin: 0 11px; }
.avatar { width: 25px; height: 25px; border-radius: 13px; background: #0e93a0; color: #fff; font-size: 13px; line-height: 25px; }
.bookmarks { flex: 0 0 34px; margin-bottom: 8px; display: flex; align-items: center; gap: 22px; padding: 0 17px 0 23px; font-size: 14px; white-space: nowrap; color: #333; }
.bookmarks a { display: flex; align-items: center; gap: 8px; }
.push { margin-left: auto; }
.viewport { flex: 1; min-height: 0; display: flex; overflow: hidden; }

/* Contact page */
.page { flex: 1; min-width: 0; font-family: "Noto Sans", "Open Sans", sans-serif; }
.page-wide { padding-top: 17px; }
.page-narrow { padding-top: 12px; }
.logo { width: 56%; margin: 0 auto 0 21%; }
.page-narrow .logo { width: 66%; margin: 0 auto 0 16%; }
.logo-only { font-family: "Open Sans", sans-serif; font-size: 64px; font-weight: 700; letter-spacing: 5px; fill: #7077cf; }
.logo-flans { font-family: "Liberation Serif", serif; font-size: 180px; font-weight: 700; font-style: italic; }
.site-nav { height: 52px; display: flex; align-items: center; gap: 14px; padding: 0 8px 0 23px; background: #212529; border-bottom: 2px solid #000; color: #a0a2a4; }
.brand { font-size: 16px; color: #fff; margin-right: 18px; }
.current { color: #fff; }
.disabled { color: #5f6367; }
.drop::after { content: ""; display: inline-block; margin-left: 3px; vertical-align: 3px; border: 4px solid transparent; border-top-color: currentColor; border-bottom: 0; }
.login { margin-left: auto; width: 55px; height: 33px; border-radius: 4px; background: #ffc107; color: #212529; font-size: 13px; }
.cart { display: flex; align-items: center; gap: 8px; margin-left: 13px; color: #fff; }
.count { width: 18px; height: 20px; border-radius: 10px; background: #f00; line-height: 20px; text-align: center; }
.burger { margin-left: auto; width: 46px; height: 34px; border: 1px solid #42464a; border-radius: 4px; display: grid; place-items: center; }
.contact { display: flex; flex-direction: column; align-items: center; padding-top: 40px; }
.page-narrow .contact { padding-top: 36px; }
.contact h1 { font-size: 25px; font-weight: 600; line-height: 36px; margin-bottom: 38px; }
.page-narrow h1 { font-size: 22px; margin-bottom: 37px; }
.contact label { line-height: 18px; margin-bottom: 7px; }
.contact input { width: 158px; height: 24px; border: 1px solid #767676; margin-bottom: 15px; }
.contact textarea { width: 272px; height: 206px; border: 1px solid #767676; margin-bottom: 17px; }
.send { width: 51px; height: 32px; border-radius: 4px; background: #0d6efd; color: #fff; font-size: 13px; }
.send-wrap { position: relative; }
.tip { position: absolute; left: 83px; top: -4px; width: 167px; height: 33px; line-height: 31px; border: 1px solid #666; background: #fff; text-align: center; font-family: "Open Sans", sans-serif; font-size: 14px; white-space: nowrap; color: #444; }
.site-foot { height: 80px; padding-top: 14px; background: #212529; color: #fff; text-align: center; }
.site-foot p { line-height: 18px; }
.social { display: flex; justify-content: center; gap: 8px; padding-top: 16px; }
.social a { display: flex; line-height: 16px; }
.scrollbar { width: 22px; border-left: 2px solid #fff; background: #f1f1f1; display: flex; flex-direction: column; align-items: center; padding: 6px 0; gap: 5px; }
.thumb { align-self: stretch; flex: 1; margin: 0 2px 35px; background: #c1c1c1; }
.helper { position: absolute; display: flex; flex-direction: column; align-items: flex-end; gap: 7px; }
.helper-front { right: 22px; bottom: 189px; }
.helper-side { right: 0; bottom: 189px; }
.helper button { display: grid; place-items: center; background: #fff; box-shadow: 0 2px 20px rgba(0, 0, 0, .14); }
.helper-small { width: 26px; height: 26px; border-radius: 13px; margin-right: 3px; }
.helper-big { width: 33px; height: 30px; border-radius: 15px 0 0 15px; }

/* Taskbar */
.taskbar { flex: 0 0 50px; position: relative; display: flex; align-items: center; background: #eee; color: #111; }
.start { width: 60px; display: grid; place-items: center; }
.search { flex: none; width: 360px; height: 50px; display: flex; align-items: center; gap: 12px; padding-left: 14px; background: #fff; border: 1px solid #c4c4c4; }
.search input { flex: 1; min-width: 0; border: 0; padding: 0; background: none; font-size: 17px; }
.scene { width: 100px; height: 43px; align-self: flex-end; }
.grip { width: 4px; height: 26px; border: solid #000; border-width: 0 1px; }
.grip-left { margin-left: 6px; }
.apps { display: flex; margin-left: 13px; }
.app { width: 62px; height: 50px; display: grid; place-items: center; }
.open { background: linear-gradient(#4a4a4a, #4a4a4a) center bottom / 51px 3px no-repeat; }
.active { background-color: #f8f8f8; background-size: 62px 3px; }
.tray { margin-left: auto; display: flex; align-items: center; gap: 11px; padding-right: 31px; }
.lang { color: #fff; font-size: 13px; }
.news { display: flex; align-items: center; gap: 13px; margin: 0 19px 0 48px; font-size: 17px; }
.news-icon { width: 24px; height: 30px; }
.clock { text-align: center; font-size: 14px; line-height: 23px; }
.notify { margin-left: 14px; }
.badge-v { font-size: 11px; fill: #fff; text-anchor: middle; }
.zoom-text { font-size: 8px; font-weight: 700; fill: #fff; text-anchor: middle; }
```
